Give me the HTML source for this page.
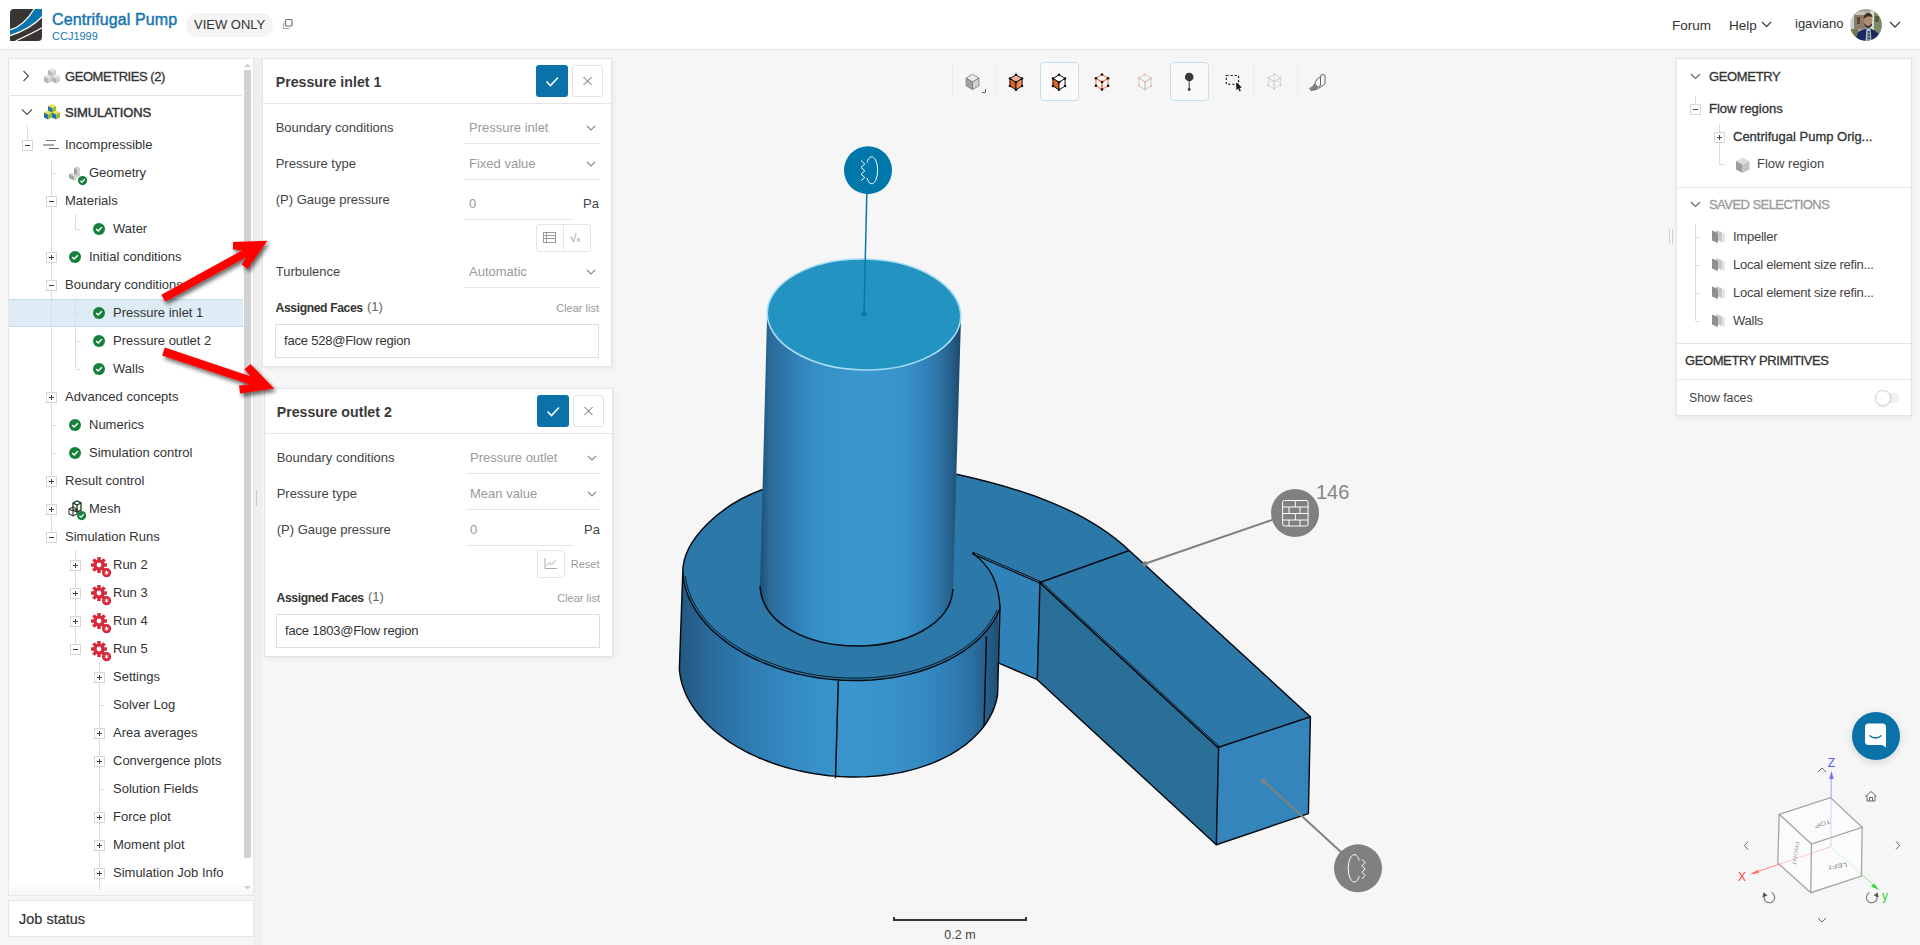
<!DOCTYPE html>
<html><head><meta charset="utf-8"><title>Centrifugal Pump</title>
<style>
html,body{margin:0;padding:0;}
body{width:1920px;height:945px;overflow:hidden;position:relative;background:#f6f6f6;font-family:"Liberation Sans", sans-serif;}
.t{position:absolute;white-space:nowrap;font-family:"Liberation Sans", sans-serif;}
.b{position:absolute;box-sizing:border-box;}
svg{position:absolute;overflow:visible;}
</style></head><body>
<div class="b" style="left:0px;top:0px;width:1920px;height:49px;background:#fff;"></div><div class="b" style="left:0px;top:49px;width:1920px;height:1px;background:#e4e4e4;"></div><div class="b" style="left:254px;top:58px;width:8px;height:887px;background:#efefef;"></div><div class="b" style="left:256px;top:490px;width:1px;height:16px;background:#c9c9c9;"></div><svg style="left:10px;top:9px" width="32" height="32" viewBox="0 0 32 32">
<path d="M4 0 H32 V28 Q32 32 28 32 H0 V4 Q0 0 4 0Z" fill="#3a3532"/>
<path d="M0 21.2 Q13.6 17.8 24.5 0 L32 0 L32 7.6 Q20 20.5 0 26.4 Z" fill="#0a76ae"/>
<path d="M0 20.8 Q13.6 17.4 24.2 0" fill="none" stroke="#fff" stroke-width="1.3"/>
<path d="M0 26.6 Q20 20.5 32 7.8" fill="none" stroke="#fff" stroke-width="1.3"/>
<path d="M5.5 32 Q22 24.5 32 18.8" fill="none" stroke="#fff" stroke-width="1.3"/>
</svg><div class="t" style="left:52px;top:11.26px;font-size:16px;line-height:18.4px;color:#1776b0;letter-spacing:0.1px;-webkit-text-stroke:0.45px #1776b0;">Centrifugal Pump</div><div class="t" style="left:52px;top:30.36px;font-size:11px;line-height:12.65px;color:#1776b0;">CCJ1999</div><div class="b" style="left:186px;top:13px;width:87px;height:24px;background:#f4f4f4;border-radius:12px;"></div><div class="t" style="left:194px;top:17.52px;font-size:13px;line-height:14.95px;color:#333;">VIEW ONLY</div><svg style="left:281px;top:18px" width="13" height="13" viewBox="0 0 13 13">
<rect x="4.5" y="1.5" width="6.5" height="6.5" rx="1" fill="none" stroke="#6a6a72" stroke-width="1.1"/>
<path d="M2.5 4.5 V10.5 H8.5" fill="none" stroke="#a8a8c0" stroke-width="1.1"/>
</svg><div class="t" style="left:1672px;top:17.56px;font-size:13.5px;line-height:15.52px;color:#333;">Forum</div><div class="t" style="left:1729px;top:17.56px;font-size:13.5px;line-height:15.52px;color:#333;">Help</div><svg style="left:1761px;top:21px" width="11" height="7"><path d="M1 1 L5.5 5.5 L10 1" fill="none" stroke="#444" stroke-width="1.3"/></svg><div class="t" style="left:1795px;top:17.02px;font-size:13px;line-height:14.95px;color:#333;">igaviano</div><svg style="left:1850px;top:9px" width="32" height="32" viewBox="0 0 32 32">
<defs><clipPath id="av"><circle cx="16" cy="16" r="15.9"/></clipPath><filter id="avb"><feGaussianBlur stdDeviation="0.5"/></filter></defs>
<g clip-path="url(#av)"><g filter="url(#avb)">
<rect width="32" height="32" fill="#a9a69c"/>
<rect x="0" y="0" width="5" height="32" fill="#c9d0d4"/>
<rect x="4" y="4" width="11" height="16" fill="#8c7c68"/>
<rect x="5" y="3" width="11" height="3" fill="#c7c4bd"/>
<rect x="7" y="8" width="3" height="7" fill="#5a4536"/>
<rect x="0" y="20" width="8" height="12" fill="#6d7a58"/>
<rect x="20" y="2" width="4" height="22" fill="#d9dad4"/>
<rect x="24" y="4" width="8" height="22" fill="#7d8a6a"/>
<rect x="25" y="7" width="4" height="6" fill="#4f6040"/>
<ellipse cx="18" cy="11.5" rx="4.2" ry="6" fill="#b38d73"/>
<path d="M13.5 9.5 Q14 3.5 19 4 Q22.5 4.5 22.5 9 L21.5 8 Q18 6 14.5 9.5Z" fill="#3c3129"/>
<path d="M14.5 14 Q18 20.5 22 14 L22 16.5 Q18 21.5 14.5 16.5Z" fill="#3a2d26"/>
<path d="M5 32 L8 23 Q12 20.5 16.5 19.5 L20.5 19.5 Q25 21 28 24 L31 32Z" fill="#1e2c5e"/>
<path d="M16.5 19.5 L20.5 19.5 L21.5 32 L15.5 32Z" fill="#a8c3e6"/>
<path d="M17.8 22 L19.8 22 L20.3 32 L17.3 32Z" fill="#3b4a5a"/>
<path d="M18 24 L20 25 M17.6 27 L20 28 M17.5 30 L20.2 31" stroke="#c9c28a" stroke-width="0.7"/>
</g></g></svg><svg style="left:1889px;top:21px" width="12" height="8"><path d="M1 1 L6 6 L11 1" fill="none" stroke="#444" stroke-width="1.4"/></svg><div class="b" style="left:8px;top:58px;width:246px;height:838px;background:#fff;border:1px solid #e6e6e6;"></div><div class="b" style="left:10px;top:880px;width:243px;height:15px;background:linear-gradient(rgba(255,255,255,0),#f7f7f7);"></div><div class="b" style="left:244px;top:70px;width:7px;height:788px;background:#d2d2d2;"></div><svg style="left:243px;top:62px" width="9" height="6"><path d="M1 5 L4.5 1.5 L8 5 Z" fill="#cfcfcf"/></svg><svg style="left:243px;top:885px" width="9" height="6"><path d="M1 1 L4.5 4.5 L8 1 Z" fill="#cfcfcf"/></svg><div class="b" style="left:8px;top:900px;width:246px;height:37px;background:#fff;border:1px solid #e6e6e6;"></div><div class="t" style="left:19px;top:911.14px;font-size:14.5px;line-height:16.67px;color:#333;-webkit-text-stroke:0.2px #333;">Job status</div><svg style="left:22px;top:70px" width="8" height="12"><path d="M1.5 1 L6.5 6 L1.5 11" fill="none" stroke="#555" stroke-width="1.2"/></svg><svg style="left:21px;top:108px" width="12" height="8"><path d="M1 1.5 L6 6.5 L11 1.5" fill="none" stroke="#555" stroke-width="1.2"/></svg><svg style="left:43px;top:67px" width="18" height="18"><path d="M5 3 l4 -2 l4 2 l-4 2z" fill="#e3e3e3"/><path d="M5 3 l4 2 v5 l-4 -2z" fill="#b5b5b5"/><path d="M13 3 l-4 2 v5 l4 -2z" fill="#cfcfcf"/><path d="M1 9.5 l4 -2 l4 2 l-4 2z" fill="#e3e3e3"/><path d="M1 9.5 l4 2 v5 l-4 -2z" fill="#b5b5b5"/><path d="M9 9.5 l-4 2 v5 l4 -2z" fill="#cfcfcf"/><path d="M9 9.5 l4 -2 l4 2 l-4 2z" fill="#e3e3e3"/><path d="M9 9.5 l4 2 v5 l-4 -2z" fill="#b5b5b5"/><path d="M17 9.5 l-4 2 v5 l4 -2z" fill="#cfcfcf"/></svg><svg style="left:43px;top:103px" width="18" height="18"><path d="M5 3 l4 -2 l4 2 l-4 2z" fill="#f0e046"/><path d="M5 3 l4 2 v5 l-4 -2z" fill="#2a6fb0"/><path d="M13 3 l-4 2 v5 l4 -2z" fill="#8bbf3a"/><path d="M1 9.5 l4 -2 l4 2 l-4 2z" fill="#f0e046"/><path d="M1 9.5 l4 2 v5 l-4 -2z" fill="#2a6fb0"/><path d="M9 9.5 l-4 2 v5 l4 -2z" fill="#8bbf3a"/><path d="M9 9.5 l4 -2 l4 2 l-4 2z" fill="#f0e046"/><path d="M9 9.5 l4 2 v5 l-4 -2z" fill="#2a6fb0"/><path d="M17 9.5 l-4 2 v5 l4 -2z" fill="#8bbf3a"/></svg><div class="t" style="left:65px;top:69.52px;font-size:13px;line-height:14.95px;color:#333;letter-spacing:-0.45px;-webkit-text-stroke:0.3px #333;">GEOMETRIES (2)</div><div class="b" style="left:10px;top:95px;width:232px;height:1px;background:#e4e4e4;"></div><div class="t" style="left:65px;top:105.52px;font-size:13px;line-height:14.95px;color:#333;letter-spacing:-0.1px;-webkit-text-stroke:0.45px #333;">SIMULATIONS</div><div class="b" style="left:27px;top:125px;width:1px;height:15px;background:#dcdcdc;"></div><div class="b" style="left:51px;top:160px;width:1px;height:376px;background:#dcdcdc;"></div><div class="b" style="left:51px;top:173px;width:5px;height:1px;background:#dcdcdc;"></div><div class="b" style="left:51px;top:425px;width:5px;height:1px;background:#dcdcdc;"></div><div class="b" style="left:51px;top:453px;width:5px;height:1px;background:#dcdcdc;"></div><div class="b" style="left:75px;top:214px;width:1px;height:15px;background:#dcdcdc;"></div><div class="b" style="left:75px;top:229px;width:5px;height:1px;background:#dcdcdc;"></div><div class="b" style="left:75px;top:298px;width:1px;height:70px;background:#dcdcdc;"></div><div class="b" style="left:75px;top:313px;width:5px;height:1px;background:#dcdcdc;"></div><div class="b" style="left:75px;top:341px;width:5px;height:1px;background:#dcdcdc;"></div><div class="b" style="left:75px;top:369px;width:5px;height:1px;background:#dcdcdc;"></div><div class="b" style="left:75px;top:550px;width:1px;height:98px;background:#dcdcdc;"></div><div class="b" style="left:99px;top:662px;width:1px;height:228px;background:#dcdcdc;"></div><div class="b" style="left:99px;top:705px;width:5px;height:1px;background:#dcdcdc;"></div><div class="b" style="left:99px;top:789px;width:5px;height:1px;background:#dcdcdc;"></div><div class="b" style="left:9px;top:299px;width:234px;height:28px;background:#deedf5;border-top:1px solid #c5dcea;border-bottom:1px solid #c5dcea;"></div><div class="b" style="left:51px;top:299px;width:1px;height:28px;background:#dcdcdc;"></div><div class="b" style="left:75px;top:299px;width:1px;height:28px;background:#dcdcdc;"></div><div class="b" style="left:75px;top:313px;width:5px;height:1px;background:#dcdcdc;"></div><div class="b" style="left:22px;top:140px;width:11px;height:11px;background:#fff;border:1px solid #d6d6d6;"></div><div class="b" style="left:25px;top:145px;width:5px;height:1px;background:#444;"></div><div class="b" style="left:46px;top:140px;width:10px;height:1px;background:#777;"></div><div class="b" style="left:43px;top:144px;width:11px;height:1.5px;background:#aaa;"></div><div class="b" style="left:49px;top:147.5px;width:10px;height:1px;background:#666;"></div><div class="t" style="left:65px;top:138.02px;font-size:13px;line-height:14.95px;color:#333;">Incompressible</div><svg style="left:68px;top:166px" width="22" height="20" viewBox="0 0 22 20"><path d="M6 2 l3 -1.5 l3 1.5 v8 l-3 1.5 l-3 -1.5z" fill="#d0d0d0"/><path d="M6 2 l3 1.5 v8 l-3 -1.5z" fill="#9d9d9d"/><path d="M1 8 l3 -1.5 l5 2.5 v4 l-3 1.5 l-5 -2.5z" fill="#d6d6d6"/><path d="M1 8 l5 2.5 v4 l-5 -2.5z" fill="#a5a5a5"/></svg><svg style="left:77.9px;top:176.4px" width="9.2" height="9.2" viewBox="0 0 12 12"><circle cx="6" cy="6" r="6" fill="#16813c"/><path d="M3.2 6.2 L5.2 8 L8.8 4.3" fill="none" stroke="#fff" stroke-width="1.6"/></svg><div class="t" style="left:89px;top:166.02px;font-size:13px;line-height:14.95px;color:#333;">Geometry</div><div class="b" style="left:46px;top:196px;width:11px;height:11px;background:#fff;border:1px solid #d6d6d6;"></div><div class="b" style="left:49px;top:201px;width:5px;height:1px;background:#444;"></div><div class="t" style="left:65px;top:194.02px;font-size:13px;line-height:14.95px;color:#333;">Materials</div><svg style="left:93px;top:223px" width="12" height="12" viewBox="0 0 12 12"><circle cx="6" cy="6" r="6" fill="#16813c"/><path d="M3.2 6.2 L5.2 8 L8.8 4.3" fill="none" stroke="#fff" stroke-width="1.6"/></svg><div class="t" style="left:113px;top:222.02px;font-size:13px;line-height:14.95px;color:#333;">Water</div><div class="b" style="left:46px;top:252px;width:11px;height:11px;background:#fff;border:1px solid #d6d6d6;"></div><div class="b" style="left:49px;top:257px;width:5px;height:1px;background:#444;"></div><div class="b" style="left:51px;top:255px;width:1px;height:5px;background:#444;"></div><svg style="left:69px;top:251px" width="12" height="12" viewBox="0 0 12 12"><circle cx="6" cy="6" r="6" fill="#16813c"/><path d="M3.2 6.2 L5.2 8 L8.8 4.3" fill="none" stroke="#fff" stroke-width="1.6"/></svg><div class="t" style="left:89px;top:250.02px;font-size:13px;line-height:14.95px;color:#333;">Initial conditions</div><div class="b" style="left:46px;top:280px;width:11px;height:11px;background:#fff;border:1px solid #d6d6d6;"></div><div class="b" style="left:49px;top:285px;width:5px;height:1px;background:#444;"></div><div class="t" style="left:65px;top:278.02px;font-size:13px;line-height:14.95px;color:#333;">Boundary conditions</div><svg style="left:93px;top:307px" width="12" height="12" viewBox="0 0 12 12"><circle cx="6" cy="6" r="6" fill="#16813c"/><path d="M3.2 6.2 L5.2 8 L8.8 4.3" fill="none" stroke="#fff" stroke-width="1.6"/></svg><div class="t" style="left:113px;top:306.02px;font-size:13px;line-height:14.95px;color:#333;">Pressure inlet 1</div><svg style="left:93px;top:335px" width="12" height="12" viewBox="0 0 12 12"><circle cx="6" cy="6" r="6" fill="#16813c"/><path d="M3.2 6.2 L5.2 8 L8.8 4.3" fill="none" stroke="#fff" stroke-width="1.6"/></svg><div class="t" style="left:113px;top:334.02px;font-size:13px;line-height:14.95px;color:#333;">Pressure outlet 2</div><svg style="left:93px;top:363px" width="12" height="12" viewBox="0 0 12 12"><circle cx="6" cy="6" r="6" fill="#16813c"/><path d="M3.2 6.2 L5.2 8 L8.8 4.3" fill="none" stroke="#fff" stroke-width="1.6"/></svg><div class="t" style="left:113px;top:362.02px;font-size:13px;line-height:14.95px;color:#333;">Walls</div><div class="b" style="left:46px;top:392px;width:11px;height:11px;background:#fff;border:1px solid #d6d6d6;"></div><div class="b" style="left:49px;top:397px;width:5px;height:1px;background:#444;"></div><div class="b" style="left:51px;top:395px;width:1px;height:5px;background:#444;"></div><div class="t" style="left:65px;top:390.02px;font-size:13px;line-height:14.95px;color:#333;">Advanced concepts</div><svg style="left:69px;top:419px" width="12" height="12" viewBox="0 0 12 12"><circle cx="6" cy="6" r="6" fill="#16813c"/><path d="M3.2 6.2 L5.2 8 L8.8 4.3" fill="none" stroke="#fff" stroke-width="1.6"/></svg><div class="t" style="left:89px;top:418.02px;font-size:13px;line-height:14.95px;color:#333;">Numerics</div><svg style="left:69px;top:447px" width="12" height="12" viewBox="0 0 12 12"><circle cx="6" cy="6" r="6" fill="#16813c"/><path d="M3.2 6.2 L5.2 8 L8.8 4.3" fill="none" stroke="#fff" stroke-width="1.6"/></svg><div class="t" style="left:89px;top:446.02px;font-size:13px;line-height:14.95px;color:#333;">Simulation control</div><div class="b" style="left:46px;top:476px;width:11px;height:11px;background:#fff;border:1px solid #d6d6d6;"></div><div class="b" style="left:49px;top:481px;width:5px;height:1px;background:#444;"></div><div class="b" style="left:51px;top:479px;width:1px;height:5px;background:#444;"></div><div class="t" style="left:65px;top:474.02px;font-size:13px;line-height:14.95px;color:#333;">Result control</div><div class="b" style="left:46px;top:504px;width:11px;height:11px;background:#fff;border:1px solid #d6d6d6;"></div><div class="b" style="left:49px;top:509px;width:5px;height:1px;background:#444;"></div><div class="b" style="left:51px;top:507px;width:1px;height:5px;background:#444;"></div><svg style="left:68px;top:500px" width="22" height="20" viewBox="0 0 22 20"><path d="M5 3 l4 -2 l4 2 v7 l-4 2 l-4 -2z M5 3 l4 2 v7 M9 5 l4 -2" fill="none" stroke="#0c3814" stroke-width="1.3"/><path d="M1 9 l4 -2 l4 2 v5 l-4 2 l-4 -2z M1 9 l4 2 v5 M5 11 l4 -2" fill="none" stroke="#333" stroke-width="1.1"/></svg><svg style="left:76.9px;top:511.4px" width="9.2" height="9.2" viewBox="0 0 12 12"><circle cx="6" cy="6" r="6" fill="#16813c"/><path d="M3.2 6.2 L5.2 8 L8.8 4.3" fill="none" stroke="#fff" stroke-width="1.6"/></svg><div class="t" style="left:89px;top:502.02px;font-size:13px;line-height:14.95px;color:#333;">Mesh</div><div class="b" style="left:46px;top:532px;width:11px;height:11px;background:#fff;border:1px solid #d6d6d6;"></div><div class="b" style="left:49px;top:537px;width:5px;height:1px;background:#444;"></div><div class="t" style="left:65px;top:530.02px;font-size:13px;line-height:14.95px;color:#333;">Simulation Runs</div><div class="b" style="left:70px;top:560px;width:11px;height:11px;background:#fff;border:1px solid #d6d6d6;"></div><div class="b" style="left:73px;top:565px;width:5px;height:1px;background:#444;"></div><div class="b" style="left:75px;top:563px;width:1px;height:5px;background:#444;"></div><svg style="left:89px;top:555px" width="22" height="22" viewBox="-10 -10 22 22"><g><rect x="-1.7" y="-8" width="3.4" height="4" transform="rotate(0)" fill="#d8283b"/><rect x="-1.7" y="-8" width="3.4" height="4" transform="rotate(45)" fill="#d8283b"/><rect x="-1.7" y="-8" width="3.4" height="4" transform="rotate(90)" fill="#d8283b"/><rect x="-1.7" y="-8" width="3.4" height="4" transform="rotate(135)" fill="#d8283b"/><rect x="-1.7" y="-8" width="3.4" height="4" transform="rotate(180)" fill="#d8283b"/><rect x="-1.7" y="-8" width="3.4" height="4" transform="rotate(225)" fill="#d8283b"/><rect x="-1.7" y="-8" width="3.4" height="4" transform="rotate(270)" fill="#d8283b"/><rect x="-1.7" y="-8" width="3.4" height="4" transform="rotate(315)" fill="#d8283b"/><circle r="5.6" fill="#d8283b"/><circle r="2.4" fill="#fff"/></g><circle cx="7.6" cy="7.7" r="4.6" fill="#d8283b"/><path d="M7.6 5.6 V9.8 M5.8 6.6 L9.4 8.8 M5.8 8.8 L9.4 6.6" stroke="#fff" stroke-width="0.9"/></svg><div class="t" style="left:113px;top:558.02px;font-size:13px;line-height:14.95px;color:#333;">Run 2</div><div class="b" style="left:70px;top:588px;width:11px;height:11px;background:#fff;border:1px solid #d6d6d6;"></div><div class="b" style="left:73px;top:593px;width:5px;height:1px;background:#444;"></div><div class="b" style="left:75px;top:591px;width:1px;height:5px;background:#444;"></div><svg style="left:89px;top:583px" width="22" height="22" viewBox="-10 -10 22 22"><g><rect x="-1.7" y="-8" width="3.4" height="4" transform="rotate(0)" fill="#d8283b"/><rect x="-1.7" y="-8" width="3.4" height="4" transform="rotate(45)" fill="#d8283b"/><rect x="-1.7" y="-8" width="3.4" height="4" transform="rotate(90)" fill="#d8283b"/><rect x="-1.7" y="-8" width="3.4" height="4" transform="rotate(135)" fill="#d8283b"/><rect x="-1.7" y="-8" width="3.4" height="4" transform="rotate(180)" fill="#d8283b"/><rect x="-1.7" y="-8" width="3.4" height="4" transform="rotate(225)" fill="#d8283b"/><rect x="-1.7" y="-8" width="3.4" height="4" transform="rotate(270)" fill="#d8283b"/><rect x="-1.7" y="-8" width="3.4" height="4" transform="rotate(315)" fill="#d8283b"/><circle r="5.6" fill="#d8283b"/><circle r="2.4" fill="#fff"/></g><circle cx="7.6" cy="7.7" r="4.6" fill="#d8283b"/><path d="M7.6 5.6 V9.8 M5.8 6.6 L9.4 8.8 M5.8 8.8 L9.4 6.6" stroke="#fff" stroke-width="0.9"/></svg><div class="t" style="left:113px;top:586.02px;font-size:13px;line-height:14.95px;color:#333;">Run 3</div><div class="b" style="left:70px;top:616px;width:11px;height:11px;background:#fff;border:1px solid #d6d6d6;"></div><div class="b" style="left:73px;top:621px;width:5px;height:1px;background:#444;"></div><div class="b" style="left:75px;top:619px;width:1px;height:5px;background:#444;"></div><svg style="left:89px;top:611px" width="22" height="22" viewBox="-10 -10 22 22"><g><rect x="-1.7" y="-8" width="3.4" height="4" transform="rotate(0)" fill="#d8283b"/><rect x="-1.7" y="-8" width="3.4" height="4" transform="rotate(45)" fill="#d8283b"/><rect x="-1.7" y="-8" width="3.4" height="4" transform="rotate(90)" fill="#d8283b"/><rect x="-1.7" y="-8" width="3.4" height="4" transform="rotate(135)" fill="#d8283b"/><rect x="-1.7" y="-8" width="3.4" height="4" transform="rotate(180)" fill="#d8283b"/><rect x="-1.7" y="-8" width="3.4" height="4" transform="rotate(225)" fill="#d8283b"/><rect x="-1.7" y="-8" width="3.4" height="4" transform="rotate(270)" fill="#d8283b"/><rect x="-1.7" y="-8" width="3.4" height="4" transform="rotate(315)" fill="#d8283b"/><circle r="5.6" fill="#d8283b"/><circle r="2.4" fill="#fff"/></g><circle cx="7.6" cy="7.7" r="4.6" fill="#d8283b"/><path d="M7.6 5.6 V9.8 M5.8 6.6 L9.4 8.8 M5.8 8.8 L9.4 6.6" stroke="#fff" stroke-width="0.9"/></svg><div class="t" style="left:113px;top:614.02px;font-size:13px;line-height:14.95px;color:#333;">Run 4</div><div class="b" style="left:70px;top:644px;width:11px;height:11px;background:#fff;border:1px solid #d6d6d6;"></div><div class="b" style="left:73px;top:649px;width:5px;height:1px;background:#444;"></div><svg style="left:89px;top:639px" width="22" height="22" viewBox="-10 -10 22 22"><g><rect x="-1.7" y="-8" width="3.4" height="4" transform="rotate(0)" fill="#d8283b"/><rect x="-1.7" y="-8" width="3.4" height="4" transform="rotate(45)" fill="#d8283b"/><rect x="-1.7" y="-8" width="3.4" height="4" transform="rotate(90)" fill="#d8283b"/><rect x="-1.7" y="-8" width="3.4" height="4" transform="rotate(135)" fill="#d8283b"/><rect x="-1.7" y="-8" width="3.4" height="4" transform="rotate(180)" fill="#d8283b"/><rect x="-1.7" y="-8" width="3.4" height="4" transform="rotate(225)" fill="#d8283b"/><rect x="-1.7" y="-8" width="3.4" height="4" transform="rotate(270)" fill="#d8283b"/><rect x="-1.7" y="-8" width="3.4" height="4" transform="rotate(315)" fill="#d8283b"/><circle r="5.6" fill="#d8283b"/><circle r="2.4" fill="#fff"/></g><circle cx="7.6" cy="7.7" r="4.6" fill="#d8283b"/><path d="M7.6 5.6 V9.8 M5.8 6.6 L9.4 8.8 M5.8 8.8 L9.4 6.6" stroke="#fff" stroke-width="0.9"/></svg><div class="t" style="left:113px;top:642.02px;font-size:13px;line-height:14.95px;color:#333;">Run 5</div><div class="b" style="left:94px;top:672px;width:11px;height:11px;background:#fff;border:1px solid #d6d6d6;"></div><div class="b" style="left:97px;top:677px;width:5px;height:1px;background:#444;"></div><div class="b" style="left:99px;top:675px;width:1px;height:5px;background:#444;"></div><div class="t" style="left:113px;top:670.02px;font-size:13px;line-height:14.95px;color:#333;">Settings</div><div class="t" style="left:113px;top:698.02px;font-size:13px;line-height:14.95px;color:#333;">Solver Log</div><div class="b" style="left:94px;top:728px;width:11px;height:11px;background:#fff;border:1px solid #d6d6d6;"></div><div class="b" style="left:97px;top:733px;width:5px;height:1px;background:#444;"></div><div class="b" style="left:99px;top:731px;width:1px;height:5px;background:#444;"></div><div class="t" style="left:113px;top:726.02px;font-size:13px;line-height:14.95px;color:#333;">Area averages</div><div class="b" style="left:94px;top:756px;width:11px;height:11px;background:#fff;border:1px solid #d6d6d6;"></div><div class="b" style="left:97px;top:761px;width:5px;height:1px;background:#444;"></div><div class="b" style="left:99px;top:759px;width:1px;height:5px;background:#444;"></div><div class="t" style="left:113px;top:754.02px;font-size:13px;line-height:14.95px;color:#333;">Convergence plots</div><div class="t" style="left:113px;top:782.02px;font-size:13px;line-height:14.95px;color:#333;">Solution Fields</div><div class="b" style="left:94px;top:812px;width:11px;height:11px;background:#fff;border:1px solid #d6d6d6;"></div><div class="b" style="left:97px;top:817px;width:5px;height:1px;background:#444;"></div><div class="b" style="left:99px;top:815px;width:1px;height:5px;background:#444;"></div><div class="t" style="left:113px;top:810.02px;font-size:13px;line-height:14.95px;color:#333;">Force plot</div><div class="b" style="left:94px;top:840px;width:11px;height:11px;background:#fff;border:1px solid #d6d6d6;"></div><div class="b" style="left:97px;top:845px;width:5px;height:1px;background:#444;"></div><div class="b" style="left:99px;top:843px;width:1px;height:5px;background:#444;"></div><div class="t" style="left:113px;top:838.02px;font-size:13px;line-height:14.95px;color:#333;">Moment plot</div><div class="b" style="left:94px;top:868px;width:11px;height:11px;background:#fff;border:1px solid #d6d6d6;"></div><div class="b" style="left:97px;top:873px;width:5px;height:1px;background:#444;"></div><div class="b" style="left:99px;top:871px;width:1px;height:5px;background:#444;"></div><div class="t" style="left:113px;top:866.02px;font-size:13px;line-height:14.95px;color:#333;">Simulation Job Info</div><div class="b" style="left:262px;top:58px;width:350px;height:309px;background:#fff;border:1px solid #e4e4e4;box-shadow:2px 2px 5px rgba(0,0,0,0.05);"></div><div class="b" style="left:263px;top:103px;width:348px;height:1px;background:#e6e6e6;"></div><div class="t" style="left:275.7px;top:73.91px;font-size:14.2px;line-height:16.33px;color:#3a3a3a;font-weight:700;">Pressure inlet 1</div><div class="b" style="left:536px;top:65px;width:32px;height:32px;background:#0a72a8;border-radius:3px;"></div><svg style="left:536px;top:65px" width="32" height="32"><path d="M10.5 16.5 L14.5 20.5 L22 12.5" fill="none" stroke="#fff" stroke-width="1.6"/></svg><div class="b" style="left:572px;top:65px;width:31px;height:32px;background:#fff;border:1px solid #e1e1e1;border-radius:3px;"></div><svg style="left:572px;top:65px" width="31" height="32"><path d="M11.5 12 L19.5 20 M19.5 12 L11.5 20" fill="none" stroke="#666" stroke-width="1"/></svg><div class="t" style="left:275.7px;top:120.52px;font-size:13px;line-height:14.95px;color:#444;">Boundary conditions</div><div class="t" style="left:469px;top:120.52px;font-size:13px;line-height:14.95px;color:#9a9a9a;">Pressure inlet</div><div class="b" style="left:465px;top:143px;width:134px;height:1px;background:#e6e6e6;"></div><svg style="left:586px;top:124.5px" width="10" height="6"><path d="M1 1 L5 5 L9 1" fill="none" stroke="#888" stroke-width="1.1"/></svg><div class="t" style="left:275.7px;top:156.52px;font-size:13px;line-height:14.95px;color:#444;">Pressure type</div><div class="t" style="left:469px;top:156.52px;font-size:13px;line-height:14.95px;color:#9a9a9a;">Fixed value</div><div class="b" style="left:465px;top:179px;width:134px;height:1px;background:#e6e6e6;"></div><svg style="left:586px;top:160.5px" width="10" height="6"><path d="M1 1 L5 5 L9 1" fill="none" stroke="#888" stroke-width="1.1"/></svg><div class="t" style="left:275.7px;top:193.02px;font-size:13px;line-height:14.95px;color:#444;">(P) Gauge pressure</div><div class="t" style="left:469px;top:197.02px;font-size:13px;line-height:14.95px;color:#9a9a9a;">0</div><div class="b" style="left:465px;top:219px;width:108px;height:1px;background:#e6e6e6;"></div><div class="t" style="right:1321px;top:197.02px;font-size:13px;line-height:14.95px;color:#444;">Pa</div><div class="t" style="left:275.7px;top:264.52px;font-size:13px;line-height:14.95px;color:#444;">Turbulence</div><div class="t" style="left:469px;top:264.52px;font-size:13px;line-height:14.95px;color:#9a9a9a;">Automatic</div><div class="b" style="left:465px;top:287px;width:134px;height:1px;background:#e6e6e6;"></div><svg style="left:586px;top:268.5px" width="10" height="6"><path d="M1 1 L5 5 L9 1" fill="none" stroke="#888" stroke-width="1.1"/></svg><div class="b" style="left:536px;top:224px;width:55px;height:28px;background:#fff;border:1px solid #e6e6e6;border-radius:3px;"></div><div class="b" style="left:563px;top:225px;width:1px;height:26px;background:#e6e6e6;"></div><svg style="left:543px;top:231px" width="14" height="13"><rect x="0.5" y="1.5" width="12" height="10" fill="none" stroke="#999" stroke-width="1"/><path d="M0.5 4.5 H12.5 M0.5 7.5 H12.5 M3.5 1.5 V11.5" stroke="#999" stroke-width="1"/></svg><div class="t" style="left:570px;top:231.94px;font-size:12px;line-height:13.8px;color:#999;">&#8730;<span style="font-size:8px">x</span></div><div class="t" style="left:275.5px;top:300.76px;font-size:12.2px;line-height:14.03px;color:#333;font-weight:700;letter-spacing:-0.4px;">Assigned Faces</div><div class="t" style="left:367px;top:300.02px;font-size:13px;line-height:14.95px;color:#666;">(1)</div><div class="t" style="right:1321px;top:302.36px;font-size:11px;line-height:12.65px;color:#9a9a9a;">Clear list</div><div class="b" style="left:275px;top:324.0px;width:324px;height:34px;background:#fff;border:1px solid #dedede;"></div><div class="t" style="left:284px;top:333.52px;font-size:13px;line-height:14.95px;color:#333;letter-spacing:-0.2px;">face 528@Flow region</div><div class="b" style="left:264px;top:388px;width:349px;height:269px;background:#fff;border:1px solid #e4e4e4;box-shadow:2px 2px 5px rgba(0,0,0,0.05);"></div><div class="b" style="left:265px;top:433px;width:347px;height:1px;background:#e6e6e6;"></div><div class="t" style="left:276.7px;top:403.91px;font-size:14.2px;line-height:16.33px;color:#3a3a3a;font-weight:700;">Pressure outlet 2</div><div class="b" style="left:537px;top:395px;width:32px;height:32px;background:#0a72a8;border-radius:3px;"></div><svg style="left:537px;top:395px" width="32" height="32"><path d="M10.5 16.5 L14.5 20.5 L22 12.5" fill="none" stroke="#fff" stroke-width="1.6"/></svg><div class="b" style="left:573px;top:395px;width:31px;height:32px;background:#fff;border:1px solid #e1e1e1;border-radius:3px;"></div><svg style="left:573px;top:395px" width="31" height="32"><path d="M11.5 12 L19.5 20 M19.5 12 L11.5 20" fill="none" stroke="#666" stroke-width="1"/></svg><div class="t" style="left:276.7px;top:450.52px;font-size:13px;line-height:14.95px;color:#444;">Boundary conditions</div><div class="t" style="left:470px;top:450.52px;font-size:13px;line-height:14.95px;color:#9a9a9a;">Pressure outlet</div><div class="b" style="left:466px;top:473px;width:134px;height:1px;background:#e6e6e6;"></div><svg style="left:587px;top:454.5px" width="10" height="6"><path d="M1 1 L5 5 L9 1" fill="none" stroke="#888" stroke-width="1.1"/></svg><div class="t" style="left:276.7px;top:486.52px;font-size:13px;line-height:14.95px;color:#444;">Pressure type</div><div class="t" style="left:470px;top:486.52px;font-size:13px;line-height:14.95px;color:#9a9a9a;">Mean value</div><div class="b" style="left:466px;top:509px;width:134px;height:1px;background:#e6e6e6;"></div><svg style="left:587px;top:490.5px" width="10" height="6"><path d="M1 1 L5 5 L9 1" fill="none" stroke="#888" stroke-width="1.1"/></svg><div class="t" style="left:276.7px;top:523.02px;font-size:13px;line-height:14.95px;color:#444;">(P) Gauge pressure</div><div class="t" style="left:470px;top:522.52px;font-size:13px;line-height:14.95px;color:#9a9a9a;">0</div><div class="b" style="left:466px;top:545px;width:108px;height:1px;background:#e6e6e6;"></div><div class="t" style="right:1320px;top:522.52px;font-size:13px;line-height:14.95px;color:#444;">Pa</div><div class="b" style="left:537px;top:550px;width:28px;height:28px;background:#fff;border:1px solid #e6e6e6;border-radius:3px;"></div><svg style="left:544px;top:557px" width="14" height="13"><path d="M1 1 V11.5 H13" fill="none" stroke="#aaa" stroke-width="1"/><path d="M2.5 9 L5.5 5.5 L8 7.5 L11.5 3.5" fill="none" stroke="#aaa" stroke-width="1"/></svg><div class="t" style="right:1320.5px;top:558.36px;font-size:11px;line-height:12.65px;color:#9a9a9a;">Reset</div><div class="t" style="left:276.5px;top:590.76px;font-size:12.2px;line-height:14.03px;color:#333;font-weight:700;letter-spacing:-0.4px;">Assigned Faces</div><div class="t" style="left:368px;top:590.02px;font-size:13px;line-height:14.95px;color:#666;">(1)</div><div class="t" style="right:1320px;top:592.36px;font-size:11px;line-height:12.65px;color:#9a9a9a;">Clear list</div><div class="b" style="left:276px;top:614.0px;width:324px;height:34px;background:#fff;border:1px solid #dedede;"></div><div class="t" style="left:285px;top:623.52px;font-size:13px;line-height:14.95px;color:#333;letter-spacing:-0.2px;">face 1803@Flow region</div><div class="b" style="left:1676px;top:58px;width:236px;height:358px;background:#fff;border:1px solid #e4e4e4;box-shadow:0 2px 6px rgba(0,0,0,0.06);"></div><svg style="left:1690px;top:73px" width="11" height="7"><path d="M1 1 L5.5 5.5 L10 1" fill="none" stroke="#666" stroke-width="1.2"/></svg><div class="t" style="left:1709px;top:70.02px;font-size:13px;line-height:14.95px;color:#333;letter-spacing:-0.35px;-webkit-text-stroke:0.3px #333;">GEOMETRY</div><div class="b" style="left:1695px;top:96px;width:1px;height:8px;background:#dcdcdc;"></div><div class="b" style="left:1690px;top:104px;width:11px;height:11px;background:#fff;border:1px solid #d6d6d6;"></div><div class="b" style="left:1693px;top:109px;width:5px;height:1px;background:#444;"></div><div class="t" style="left:1709px;top:101.72px;font-size:13px;line-height:14.95px;color:#333;-webkit-text-stroke:0.3px #333;">Flow regions</div><div class="b" style="left:1719px;top:124px;width:1px;height:8px;background:#dcdcdc;"></div><div class="b" style="left:1719px;top:143px;width:1px;height:21px;background:#dcdcdc;"></div><div class="b" style="left:1719px;top:164px;width:6px;height:1px;background:#dcdcdc;"></div><div class="b" style="left:1714px;top:132px;width:11px;height:11px;background:#fff;border:1px solid #d6d6d6;"></div><div class="b" style="left:1717px;top:137px;width:5px;height:1px;background:#444;"></div><div class="b" style="left:1719px;top:135px;width:1px;height:5px;background:#444;"></div><div class="t" style="left:1733px;top:129.52px;font-size:13px;line-height:14.95px;color:#333;-webkit-text-stroke:0.3px #333;">Centrifugal Pump Orig...</div><svg style="left:1735px;top:157px" width="16" height="17" viewBox="0 0 16 17">
<path d="M1 4 L7.5 0.5 L14.5 4 L7.5 7.5Z" fill="#dedede"/><path d="M1 4 L7.5 7.5 V16 L1 12.5Z" fill="#9e9e9e"/><path d="M14.5 4 L7.5 7.5 V16 L14.5 12.5Z" fill="#c4c4c4"/></svg><div class="t" style="left:1757px;top:157.02px;font-size:13px;line-height:14.95px;color:#444;">Flow region</div><div class="b" style="left:1677px;top:187px;width:234px;height:1px;background:#e4e4e4;"></div><svg style="left:1690px;top:201px" width="11" height="7"><path d="M1 1 L5.5 5.5 L10 1" fill="none" stroke="#666" stroke-width="1.2"/></svg><div class="t" style="left:1709px;top:197.62px;font-size:13px;line-height:14.95px;color:#9a9a9a;letter-spacing:-0.55px;-webkit-text-stroke:0.3px #9a9a9a;">SAVED SELECTIONS</div><div class="b" style="left:1695px;top:224px;width:1px;height:96px;background:#dcdcdc;"></div><div class="b" style="left:1695px;top:237px;width:5px;height:1px;background:#dcdcdc;"></div><svg style="left:1711px;top:229px" width="16" height="15" viewBox="0 0 16 15">
<path d="M8 2 L14 4.5 V14 L8 11.5Z" fill="#e6e6e6"/><path d="M5 1 L11 3.5 V13 L5 10.5Z" fill="#c8c8c8"/><path d="M1 1.5 L7 4 V14 L1 11.5Z" fill="#8f8f8f"/></svg><div class="t" style="left:1733px;top:229.52px;font-size:13px;line-height:14.95px;color:#444;letter-spacing:-0.25px;">Impeller</div><div class="b" style="left:1695px;top:265px;width:5px;height:1px;background:#dcdcdc;"></div><svg style="left:1711px;top:257px" width="16" height="15" viewBox="0 0 16 15">
<path d="M8 2 L14 4.5 V14 L8 11.5Z" fill="#e6e6e6"/><path d="M5 1 L11 3.5 V13 L5 10.5Z" fill="#c8c8c8"/><path d="M1 1.5 L7 4 V14 L1 11.5Z" fill="#8f8f8f"/></svg><div class="t" style="left:1733px;top:257.52px;font-size:13px;line-height:14.95px;color:#444;letter-spacing:-0.25px;">Local element size refin...</div><div class="b" style="left:1695px;top:293px;width:5px;height:1px;background:#dcdcdc;"></div><svg style="left:1711px;top:285px" width="16" height="15" viewBox="0 0 16 15">
<path d="M8 2 L14 4.5 V14 L8 11.5Z" fill="#e6e6e6"/><path d="M5 1 L11 3.5 V13 L5 10.5Z" fill="#c8c8c8"/><path d="M1 1.5 L7 4 V14 L1 11.5Z" fill="#8f8f8f"/></svg><div class="t" style="left:1733px;top:285.52px;font-size:13px;line-height:14.95px;color:#444;letter-spacing:-0.25px;">Local element size refin...</div><div class="b" style="left:1695px;top:321px;width:5px;height:1px;background:#dcdcdc;"></div><svg style="left:1711px;top:313px" width="16" height="15" viewBox="0 0 16 15">
<path d="M8 2 L14 4.5 V14 L8 11.5Z" fill="#e6e6e6"/><path d="M5 1 L11 3.5 V13 L5 10.5Z" fill="#c8c8c8"/><path d="M1 1.5 L7 4 V14 L1 11.5Z" fill="#8f8f8f"/></svg><div class="t" style="left:1733px;top:313.52px;font-size:13px;line-height:14.95px;color:#444;letter-spacing:-0.25px;">Walls</div><div class="b" style="left:1677px;top:343px;width:234px;height:1px;background:#e4e4e4;"></div><div class="t" style="left:1685px;top:354.02px;font-size:13px;line-height:14.95px;color:#333;letter-spacing:-0.4px;-webkit-text-stroke:0.3px #333;">GEOMETRY PRIMITIVES</div><div class="b" style="left:1677px;top:379px;width:234px;height:1px;background:#e4e4e4;"></div><div class="t" style="left:1689px;top:391.27px;font-size:12.3px;line-height:14.14px;color:#444;">Show faces</div><div class="b" style="left:1880px;top:393px;width:19px;height:10px;background:#f0f0f0;border-radius:5px;"></div><div class="b" style="left:1875px;top:390px;width:16px;height:16px;background:#fff;border:1px solid #d4d4d4;border-radius:50%;box-shadow:0 1px 2px rgba(0,0,0,0.12);"></div><div class="b" style="left:1669px;top:229px;width:1px;height:15px;background:#cfcfcf;"></div><div class="b" style="left:1672px;top:229px;width:1px;height:15px;background:#cfcfcf;"></div><svg style="left:0px;top:0px" width="1920" height="945" viewBox="0 0 1920 945"><defs>
<linearGradient id="gPipe" gradientUnits="userSpaceOnUse" x1="760" y1="0" x2="961" y2="0">
<stop offset="0" stop-color="#1d4f72"/><stop offset="0.05" stop-color="#2a6c9b"/><stop offset="0.15" stop-color="#2f7bb1"/>
<stop offset="0.27" stop-color="#358fc5"/><stop offset="0.42" stop-color="#3995cb"/><stop offset="0.6" stop-color="#3a97cd"/><stop offset="0.72" stop-color="#3791c8"/>
<stop offset="0.82" stop-color="#3283bb"/><stop offset="0.9" stop-color="#2c71a3"/><stop offset="0.955" stop-color="#245d87"/><stop offset="1" stop-color="#1c4868"/>
</linearGradient>
<linearGradient id="gBase" gradientUnits="userSpaceOnUse" x1="679" y1="0" x2="998" y2="0">
<stop offset="0" stop-color="#22587f"/><stop offset="0.1" stop-color="#2a6b9b"/><stop offset="0.25" stop-color="#3080b7"/><stop offset="0.42" stop-color="#3790c8"/>
<stop offset="0.55" stop-color="#3a96cc"/><stop offset="0.7" stop-color="#3790c7"/><stop offset="0.84" stop-color="#3180b8"/><stop offset="0.92" stop-color="#2b6fa2"/><stop offset="0.97" stop-color="#245c86"/><stop offset="1" stop-color="#1f4f72"/>
</linearGradient>
</defs><path d="M999.98 608.50 L998.64 611.65 L997.14 614.76 L995.48 617.84 L993.67 620.87 L991.71 623.86 L989.59 626.79 L987.33 629.68 L984.93 632.51 L982.38 635.29 L979.69 638.00 L976.86 640.65 L973.90 643.24 L970.81 645.75 L967.59 648.20 L964.24 650.57 L960.77 652.87 L957.18 655.09 L953.48 657.22 L949.67 659.28 L945.74 661.25 L941.72 663.14 L937.60 664.93 L933.38 666.64 L929.07 668.25 L924.67 669.77 L920.20 671.20 L915.64 672.52 L911.01 673.75 L906.32 674.88 L901.56 675.91 L896.74 676.84 L891.87 677.67 L886.95 678.39 L881.99 679.01 L876.98 679.53 L871.95 679.94 L866.88 680.24 L861.80 680.44 L856.69 680.53 L851.57 680.52 L846.44 680.40 L841.32 680.17 L836.19 679.84 L831.07 679.40 L825.96 678.86 L820.88 678.21 L815.81 677.46 L810.78 676.61 L805.77 675.65 L800.81 674.59 L795.89 673.44 L791.02 672.18 L786.20 670.83 L781.44 669.38 L776.74 667.83 L772.12 666.19 L767.56 664.46 L763.08 662.64 L758.69 660.74 L754.38 658.74 L750.16 656.67 L746.03 654.51 L742.01 652.27 L738.09 649.95 L734.27 647.56 L730.57 645.09 L726.98 642.56 L723.51 639.95 L720.16 637.29 L716.94 634.56 L713.84 631.77 L710.88 628.92 L708.05 626.02 L705.36 623.07 L702.81 620.07 L700.40 617.03 L698.14 613.94 L696.03 610.82 L694.07 607.66 L692.25 604.47 L690.59 601.24 L689.09 598.00 L687.75 594.73 L686.56 591.44 L685.53 588.14 L684.66 584.82 L683.95 581.49 L683.41 578.16 L683.03 574.83 L682.81 571.49 C683 540 720 505 762.5 489.5 C800 474 900 466 956.5 474.3 C1016.5 487.5 1084.2 507.7 1129.2 550.5 L1310.4 716.8 L1218.6 747.2 L1040 582.5 L972.6 553 C990 566 999 582 1000 605 Z" fill="#2c78a9"/><path d="M682.81 571.49 L683.03 574.83 L683.41 578.16 L683.95 581.49 L684.66 584.82 L685.53 588.14 L686.56 591.44 L687.75 594.73 L689.09 598.00 L690.59 601.24 L692.25 604.47 L694.07 607.66 L696.03 610.82 L698.14 613.94 L700.40 617.03 L702.81 620.07 L705.36 623.07 L708.05 626.02 L710.88 628.92 L713.84 631.77 L716.94 634.56 L720.16 637.29 L723.51 639.95 L726.98 642.56 L730.57 645.09 L734.27 647.56 L738.09 649.95 L742.01 652.27 L746.03 654.51 L750.16 656.67 L754.38 658.74 L758.69 660.74 L763.08 662.64 L767.56 664.46 L772.12 666.19 L776.74 667.83 L781.44 669.38 L786.20 670.83 L791.02 672.18 L795.89 673.44 L800.81 674.59 L805.77 675.65 L810.78 676.61 L815.81 677.46 L820.88 678.21 L825.96 678.86 L831.07 679.40 L836.19 679.84 L841.32 680.17 L846.44 680.40 L851.57 680.52 L856.69 680.53 L861.80 680.44 L866.88 680.24 L871.95 679.94 L876.98 679.53 L881.99 679.01 L886.95 678.39 L891.87 677.67 L896.74 676.84 L901.56 675.91 L906.32 674.88 L911.01 673.75 L915.64 672.52 L920.20 671.20 L924.67 669.77 L929.07 668.25 L933.38 666.64 L937.60 664.93 L941.72 663.14 L945.74 661.25 L949.67 659.28 L953.48 657.22 L957.18 655.09 L960.77 652.87 L964.24 650.57 L967.59 648.20 L970.81 645.75 L973.90 643.24 L976.86 640.65 L979.69 638.00 L982.38 635.29 L984.93 632.51 L987.33 629.68 L989.59 626.79 L991.71 623.86 L993.67 620.87 L995.48 617.84 L997.14 614.76 L998.64 611.65 L999.98 608.50 L997.60 694.46 L997.01 697.80 L996.25 701.11 L995.30 704.39 L994.19 707.64 L992.90 710.86 L991.44 714.03 L989.80 717.16 L988.00 720.25 L986.03 723.28 L983.90 726.26 L981.60 729.18 L979.15 732.04 L976.54 734.83 L973.77 737.56 L970.85 740.22 L967.79 742.81 L964.58 745.32 L961.23 747.75 L957.75 750.10 L954.13 752.36 L950.38 754.54 L946.51 756.63 L942.52 758.63 L938.41 760.53 L934.19 762.34 L929.86 764.05 L925.43 765.66 L920.91 767.17 L916.29 768.58 L911.58 769.88 L906.80 771.08 L901.94 772.17 L897.01 773.15 L892.01 774.02 L886.95 774.78 L881.84 775.42 L876.68 775.96 L871.48 776.38 L866.25 776.69 L860.98 776.88 L855.68 776.96 L850.37 776.93 L845.05 776.78 L839.72 776.52 L834.38 776.14 L829.06 775.66 L823.74 775.05 L818.44 774.34 L813.16 773.52 L807.91 772.58 L802.70 771.54 L797.52 770.39 L792.40 769.13 L787.32 767.76 L782.30 766.29 L777.35 764.72 L772.46 763.05 L767.65 761.28 L762.91 759.42 L758.27 757.46 L753.71 755.41 L749.25 753.26 L744.88 751.03 L740.62 748.72 L736.48 746.32 L732.44 743.84 L728.53 741.29 L724.73 738.66 L721.07 735.96 L717.54 733.19 L714.14 730.35 L710.88 727.46 L707.76 724.50 L704.80 721.49 L701.98 718.43 L699.31 715.32 L696.80 712.16 L694.45 708.96 L692.26 705.73 L690.23 702.46 L688.37 699.15 L686.68 695.83 L685.16 692.47 L683.81 689.10 L682.63 685.71 L681.62 682.31 L680.80 678.91 L680.15 675.49 L679.67 672.08 L679.38 668.67 Z" fill="url(#gBase)"/><path d="M972.6 553 L1040 582.5 L1037.3 679.7 L997.7 662.6 L998.6 600 C999 582 990 566 972.6 553 Z" fill="#3083b9"/><polygon points="1040,582.5 1218.6,747.2 1216.3,844.8 1037.3,679.7" fill="#2a6f98"/><polygon points="1218.6,747.2 1310.4,716.8 1308.4,813.6 1216.3,844.8" fill="#3485bc"/><path d="M767 318 L760 586 C762 625 810 646 857 646 C905 646 951 625 953 589 L961 318 Z" fill="url(#gPipe)"/><ellipse cx="864" cy="314.5" rx="96.8" ry="55.5" transform="rotate(1.2 864 314.5)" fill="#2394c1" stroke="#a9dcf5" stroke-width="1.6"/><path d="M762.5 489.5 C720 505 683 540 682.81 571.49 L679.38 668.67 L679.38 668.67 L679.67 672.08 L680.15 675.49 L680.80 678.91 L681.62 682.31 L682.63 685.71 L683.81 689.10 L685.16 692.47 L686.68 695.83 L688.37 699.15 L690.23 702.46 L692.26 705.73 L694.45 708.96 L696.80 712.16 L699.31 715.32 L701.98 718.43 L704.80 721.49 L707.76 724.50 L710.88 727.46 L714.14 730.35 L717.54 733.19 L721.07 735.96 L724.73 738.66 L728.53 741.29 L732.44 743.84 L736.48 746.32 L740.62 748.72 L744.88 751.03 L749.25 753.26 L753.71 755.41 L758.27 757.46 L762.91 759.42 L767.65 761.28 L772.46 763.05 L777.35 764.72 L782.30 766.29 L787.32 767.76 L792.40 769.13 L797.52 770.39 L802.70 771.54 L807.91 772.58 L813.16 773.52 L818.44 774.34 L823.74 775.05 L829.06 775.66 L834.38 776.14 L839.72 776.52 L845.05 776.78 L850.37 776.93 L855.68 776.96 L860.98 776.88 L866.25 776.69 L871.48 776.38 L876.68 775.96 L881.84 775.42 L886.95 774.78 L892.01 774.02 L897.01 773.15 L901.94 772.17 L906.80 771.08 L911.58 769.88 L916.29 768.58 L920.91 767.17 L925.43 765.66 L929.86 764.05 L934.19 762.34 L938.41 760.53 L942.52 758.63 L946.51 756.63 L950.38 754.54 L954.13 752.36 L957.75 750.10 L961.23 747.75 L964.58 745.32 L967.79 742.81 L970.85 740.22 L973.77 737.56 L976.54 734.83 L979.15 732.04 L981.60 729.18 L983.90 726.26 L986.03 723.28 L988.00 720.25 L989.80 717.16 L991.44 714.03 L992.90 710.86 L994.19 707.64 L995.30 704.39 L996.25 701.11 L997.01 697.80 L997.60 694.46 L1000 605" fill="none" stroke="#050a10" stroke-width="1.45" stroke-linejoin="round"/><path d="M956.5 474.3 C1016.5 487.5 1084.2 507.7 1129.2 550.5 L1310.4 716.8 L1308.4 813.6 L1216.3 844.8 L1037.3 679.7 L997.7 662.6" fill="none" stroke="#050a10" stroke-width="1.45" stroke-linejoin="round"/><path d="M682.81 571.49 L683.03 574.83 L683.41 578.16 L683.95 581.49 L684.66 584.82 L685.53 588.14 L686.56 591.44 L687.75 594.73 L689.09 598.00 L690.59 601.24 L692.25 604.47 L694.07 607.66 L696.03 610.82 L698.14 613.94 L700.40 617.03 L702.81 620.07 L705.36 623.07 L708.05 626.02 L710.88 628.92 L713.84 631.77 L716.94 634.56 L720.16 637.29 L723.51 639.95 L726.98 642.56 L730.57 645.09 L734.27 647.56 L738.09 649.95 L742.01 652.27 L746.03 654.51 L750.16 656.67 L754.38 658.74 L758.69 660.74 L763.08 662.64 L767.56 664.46 L772.12 666.19 L776.74 667.83 L781.44 669.38 L786.20 670.83 L791.02 672.18 L795.89 673.44 L800.81 674.59 L805.77 675.65 L810.78 676.61 L815.81 677.46 L820.88 678.21 L825.96 678.86 L831.07 679.40 L836.19 679.84 L841.32 680.17 L846.44 680.40 L851.57 680.52 L856.69 680.53 L861.80 680.44 L866.88 680.24 L871.95 679.94 L876.98 679.53 L881.99 679.01 L886.95 678.39 L891.87 677.67 L896.74 676.84 L901.56 675.91 L906.32 674.88 L911.01 673.75 L915.64 672.52 L920.20 671.20 L924.67 669.77 L929.07 668.25 L933.38 666.64 L937.60 664.93 L941.72 663.14 L945.74 661.25 L949.67 659.28 L953.48 657.22 L957.18 655.09 L960.77 652.87 L964.24 650.57 L967.59 648.20 L970.81 645.75 L973.90 643.24 L976.86 640.65 L979.69 638.00 L982.38 635.29 L984.93 632.51 L987.33 629.68 L989.59 626.79 L991.71 623.86 L993.67 620.87 L995.48 617.84 L997.14 614.76 L998.64 611.65 L999.98 608.50 C999 582 990 566 972.6 553" fill="none" stroke="#050a10" stroke-width="1.45" stroke-linejoin="round"/><path d="M685.33 575.99 L685.76 579.17 L686.35 582.35 L687.08 585.53 L687.97 588.69 L689.01 591.84 L690.19 594.98 L691.53 598.10 L693.02 601.20 L694.65 604.27 L696.42 607.31 L698.34 610.33 L700.40 613.31 L702.60 616.25 L704.93 619.16 L707.40 622.02 L710.00 624.84 L712.73 627.61 L715.59 630.33 L718.57 633.00 L721.68 635.61 L724.90 638.17 L728.24 640.66 L731.69 643.09 L735.25 645.46 L738.91 647.76 L742.67 649.99 L746.54 652.15 L750.49 654.23 L754.54 656.24 L758.68 658.17 L762.89 660.02 L767.19 661.79 L771.56 663.47 L776.00 665.07 L780.50 666.58 L785.07 668.01 L789.69 669.35 L794.37 670.59 L799.09 671.74 L803.86 672.81 L808.67 673.77 L813.51 674.64 L818.38 675.42 L823.27 676.10 L828.19 676.68 L833.11 677.17 L838.05 677.56 L843.00 677.84 L847.95 678.03 L852.89 678.12 L857.82 678.11 L862.74 678.01 L867.64 677.80 L872.52 677.49 L877.37 677.09 L882.19 676.59 L886.97 675.99 L891.71 675.29 L896.41 674.50 L901.05 673.61 L905.64 672.62 L910.16 671.55 L914.63 670.38 L919.02 669.11 L923.34 667.76 L927.59 666.32 L931.75 664.79 L935.83 663.18 L939.82 661.48 L943.71 659.69 L947.51 657.83 L951.21 655.89 L954.81 653.87 L958.30 651.77 L961.67 649.60 L964.93 647.36 L968.08 645.05 L971.11 642.67 L974.01 640.22 L976.78 637.72 L979.43 635.15 L981.94 632.53 L984.33 629.85 L986.57 627.12 L988.68 624.34 L990.65 621.52 L992.47 618.65 L994.15 615.73 L995.69 612.78 L997.08 609.79 " fill="none" stroke="#050a10" stroke-width="0.9"/><path d="M973.5 553.5 L1040.5 582.5" fill="none" stroke="#050a10" stroke-width="2.9" stroke-linecap="round"/><path d="M975 554 L1039 581.7" fill="none" stroke="#4a98cc" stroke-width="0.7"/><path d="M1040 582.5 L1128.6 550.8 M1040 582.5 L1218.6 747.2 L1310.4 716.8 M1218.6 747.2 L1216.3 844.8 M1040 582.5 L1037.3 679.7 M838.3 681 L835.5 778.3 M986.5 636 L984 726" fill="none" stroke="#050a10" stroke-width="1.45" stroke-linejoin="round"/><path d="M1040.5 582.5 L1218.6 747.2" fill="none" stroke="#050a10" stroke-width="2.9"/><path d="M1042 583.2 L1217.5 745.6" fill="none" stroke="#4a98cc" stroke-width="0.7"/><path d="M760 586 C762 625 810 646 857 646 C905 646 951 625 953 589" fill="none" stroke="#050a10" stroke-width="1.45" stroke-linejoin="round"/><line x1="866.8" y1="194" x2="864" y2="314" stroke="#0a77ab" stroke-width="1.5"/><circle cx="864" cy="314" r="2.6" fill="#0a77ab"/><circle cx="868" cy="170.2" r="24" fill="#0077ab"/><path d="M866.9 162.6 A5.9 13.5 0 1 1 866.9 178" fill="none" stroke="#fff" stroke-width="1"/><path d="M861 160.5 L864.8 164 L861 167.4 L864.8 170.8 L861 174.2 L864.8 177.5 L861 180.7" fill="none" stroke="#fff" stroke-width="1"/><line x1="1145" y1="563.8" x2="1272" y2="520" stroke="#808080" stroke-width="2"/><circle cx="1145" cy="563.8" r="2.6" fill="#808080"/><circle cx="1295" cy="513" r="24" fill="#808080"/><rect x="1282.6" y="500.5" width="25.5" height="25.5" rx="2" fill="none" stroke="#fff" stroke-width="1"/><path d="M1282.6 507 H1308 M1282.6 513.5 H1308 M1282.6 520 H1308 M1295.3 500.5 V507 M1295.3 513.5 V520 M1289 507 V513.5 M1300 507 V513.5 M1289 520 V526 M1300 520 V526" stroke="#fff" stroke-width="1"/><text x="1316" y="498.6" font-family="Liberation Sans" font-size="20" fill="#858585">146</text><line x1="1263.7" y1="781.1" x2="1341" y2="852" stroke="#808080" stroke-width="2"/><circle cx="1263.7" cy="781.1" r="2.6" fill="#808080"/><circle cx="1358" cy="868.3" r="24" fill="#808080"/><path d="M1359.3 860.4 A6.1 13.7 0 1 0 1359.3 876.2" fill="none" stroke="#fff" stroke-width="1"/><path d="M1362 859.4 L1365.2 862.6 L1362 865.8 L1365.2 869 L1362 872.2 L1365.2 875.4 L1362 878.7" fill="none" stroke="#fff" stroke-width="1"/></svg><div class="b" style="left:952px;top:62px;width:1px;height:38px;background:#ededed;"></div><div class="b" style="left:996px;top:62px;width:1px;height:38px;background:#ededed;"></div><div class="b" style="left:1213px;top:62px;width:1px;height:38px;background:#ededed;"></div><div class="b" style="left:1253px;top:62px;width:1px;height:38px;background:#ededed;"></div><div class="b" style="left:1297px;top:62px;width:1px;height:38px;background:#ededed;"></div><div class="b" style="left:1040px;top:62px;width:39px;height:39px;background:#fafafa;border:1px solid #c4dff0;border-radius:4px;"></div><div class="b" style="left:1170px;top:62px;width:39px;height:39px;background:#fafafa;border:1px solid #c4dff0;border-radius:4px;"></div><svg style="left:0px;top:0px" width="1920" height="120"><polygon points="972.50,74.40 978.91,78.20 972.50,82.00 966.09,78.20" fill="#ededed" stroke="#777" stroke-width="0.8" stroke-linejoin="round"/><polygon points="966.09,78.20 972.50,82.00 972.50,89.60 966.09,85.80" fill="#a3a3a3" stroke="#777" stroke-width="0.8" stroke-linejoin="round"/><polygon points="972.50,82.00 978.91,78.20 978.91,85.80 972.50,89.60" fill="#d3d3d3" stroke="#777" stroke-width="0.8" stroke-linejoin="round"/><path d="M982 92.5 H985.5 V89" fill="none" stroke="#555" stroke-width="0.9"/><polygon points="1016.00,74.80 1022.06,78.55 1016.00,82.30 1009.94,78.55" fill="#f5b393" stroke="#111" stroke-width="1" stroke-linejoin="round"/><polygon points="1009.94,78.55 1016.00,82.30 1016.00,89.80 1009.94,86.05" fill="#e3622b" stroke="#111" stroke-width="1" stroke-linejoin="round"/><polygon points="1016.00,82.30 1022.06,78.55 1022.06,86.05 1016.00,89.80" fill="#ef8a5a" stroke="#111" stroke-width="1" stroke-linejoin="round"/><circle cx="1016.00" cy="74.80" r="1.25" fill="#111"/><circle cx="1009.94" cy="78.55" r="1.25" fill="#111"/><circle cx="1022.06" cy="78.55" r="1.25" fill="#111"/><circle cx="1016.00" cy="82.30" r="1.25" fill="#111"/><circle cx="1009.94" cy="86.05" r="1.25" fill="#111"/><circle cx="1022.06" cy="86.05" r="1.25" fill="#111"/><circle cx="1016.00" cy="89.80" r="1.25" fill="#111"/><polygon points="1059.00,74.80 1065.06,78.55 1059.00,82.30 1052.94,78.55" fill="#fff" stroke="#111" stroke-width="1" stroke-linejoin="round"/><polygon points="1052.94,78.55 1059.00,82.30 1059.00,89.80 1052.94,86.05" fill="#e3622b" stroke="#111" stroke-width="1" stroke-linejoin="round"/><polygon points="1059.00,82.30 1065.06,78.55 1065.06,86.05 1059.00,89.80" fill="#fff" stroke="#111" stroke-width="1" stroke-linejoin="round"/><circle cx="1059.00" cy="74.80" r="1.25" fill="#111"/><circle cx="1052.94" cy="78.55" r="1.25" fill="#111"/><circle cx="1065.06" cy="78.55" r="1.25" fill="#111"/><circle cx="1059.00" cy="82.30" r="1.25" fill="#111"/><circle cx="1052.94" cy="86.05" r="1.25" fill="#111"/><circle cx="1065.06" cy="86.05" r="1.25" fill="#111"/><circle cx="1059.00" cy="89.80" r="1.25" fill="#111"/><polygon points="1102.00,74.50 1108.06,78.25 1102.00,82.00 1095.94,78.25" fill="none" stroke="#e3622b" stroke-width="0.9" stroke-linejoin="round"/><polygon points="1095.94,78.25 1102.00,82.00 1102.00,89.50 1095.94,85.75" fill="none" stroke="#e3622b" stroke-width="0.9" stroke-linejoin="round"/><polygon points="1102.00,82.00 1108.06,78.25 1108.06,85.75 1102.00,89.50" fill="none" stroke="#e3622b" stroke-width="0.9" stroke-linejoin="round"/><circle cx="1102.00" cy="74.50" r="1.3" fill="#111"/><circle cx="1095.94" cy="78.25" r="1.3" fill="#111"/><circle cx="1108.06" cy="78.25" r="1.3" fill="#111"/><circle cx="1102.00" cy="82.00" r="1.3" fill="#111"/><circle cx="1095.94" cy="85.75" r="1.3" fill="#111"/><circle cx="1108.06" cy="85.75" r="1.3" fill="#111"/><circle cx="1102.00" cy="89.50" r="1.3" fill="#111"/><polygon points="1145.00,74.50 1151.06,78.25 1145.00,82.00 1138.94,78.25" fill="none" stroke="#bbb" stroke-width="0.7" stroke-linejoin="round"/><polygon points="1138.94,78.25 1145.00,82.00 1145.00,89.50 1138.94,85.75" fill="none" stroke="#bbb" stroke-width="0.7" stroke-linejoin="round"/><polygon points="1145.00,82.00 1151.06,78.25 1151.06,85.75 1145.00,89.50" fill="none" stroke="#bbb" stroke-width="0.7" stroke-linejoin="round"/><circle cx="1145.00" cy="74.50" r="1.1" fill="#f3b79a"/><circle cx="1138.94" cy="78.25" r="1.1" fill="#f3b79a"/><circle cx="1151.06" cy="78.25" r="1.1" fill="#f3b79a"/><circle cx="1145.00" cy="82.00" r="1.1" fill="#f3b79a"/><circle cx="1138.94" cy="85.75" r="1.1" fill="#f3b79a"/><circle cx="1151.06" cy="85.75" r="1.1" fill="#f3b79a"/><circle cx="1145.00" cy="89.50" r="1.1" fill="#f3b79a"/><circle cx="1189.2" cy="77" r="4.3" fill="#3a3a3a"/><path d="M1189.2 80 V89" stroke="#3a3a3a" stroke-width="1"/><circle cx="1189.2" cy="89.5" r="1.4" fill="#3a3a3a"/><rect x="1226.3" y="75.5" width="12.3" height="8.8" fill="none" stroke="#111" stroke-width="1.1" stroke-dasharray="2.2 2"/><path d="M1236.3 82.3 L1236.3 90 L1238.2 88.4 L1239.6 91.4 L1240.8 90.8 L1239.5 87.9 L1241.8 87.6 Z" fill="#111"/><polygon points="1274.30,74.20 1280.36,77.85 1274.30,81.50 1268.24,77.85" fill="none" stroke="#cfcfcf" stroke-width="0.8" stroke-linejoin="round"/><polygon points="1268.24,77.85 1274.30,81.50 1274.30,88.80 1268.24,85.15" fill="none" stroke="#cfcfcf" stroke-width="0.8" stroke-linejoin="round"/><polygon points="1274.30,81.50 1280.36,77.85 1280.36,85.15 1274.30,88.80" fill="none" stroke="#cfcfcf" stroke-width="0.8" stroke-linejoin="round"/><circle cx="1274.30" cy="74.20" r="0.9" fill="#c4c4c4"/><circle cx="1268.24" cy="77.85" r="0.9" fill="#c4c4c4"/><circle cx="1280.36" cy="77.85" r="0.9" fill="#c4c4c4"/><circle cx="1274.30" cy="81.50" r="0.9" fill="#c4c4c4"/><circle cx="1268.24" cy="85.15" r="0.9" fill="#c4c4c4"/><circle cx="1280.36" cy="85.15" r="0.9" fill="#c4c4c4"/><circle cx="1274.30" cy="88.80" r="0.9" fill="#c4c4c4"/><path d="M1268 81.5 H1281 M1274.3 74.5 V88.5" stroke="#d8d8d8" stroke-width="0.6"/><path d="M1313 90 L1320.5 85.5 L1320.5 77 Q1320.5 74 1324 74.5 L1325 76 L1325 84 L1317.5 89 Z M1320.5 77 Q1316 78 1315 84 L1313 85.5" fill="none" stroke="#555" stroke-width="0.9"/><path d="M1309.5 88.5 L1315.5 84.5 L1317.5 87 L1311.5 91 Z" fill="#888" stroke="#555" stroke-width="0.6"/></svg><div class="b" style="left:893px;top:919px;width:134px;height:2px;background:#333;"></div><div class="b" style="left:893px;top:917px;width:2px;height:4px;background:#333;"></div><div class="b" style="left:1025px;top:917px;width:2px;height:4px;background:#333;"></div><div class="t" style="left:960px;top:928.48px;font-size:12.5px;line-height:14.37px;color:#444;transform:translateX(-50%);">0.2 m</div><div class="b" style="left:1852px;top:712px;width:48px;height:48px;background:#0a72a8;border-radius:50%;box-shadow:0 2px 8px rgba(0,0,0,0.15);"></div><svg style="left:1852px;top:712px" width="48" height="48"><path d="M13 15 Q13 11.5 16.5 11.5 H30.5 Q34 11.5 34 15 V35.5 L30 33 H16.5 Q13 33 13 29.5 Z" fill="#fff"/><path d="M17.5 23.5 Q23.5 28.5 29.5 23.5" fill="none" stroke="#0a72a8" stroke-width="1.6"/></svg><svg style="left:1700px;top:740px" width="220" height="205" viewBox="1700 740 220 205"><line x1="1830.5" y1="846.8" x2="1752" y2="873.5" stroke="#ff8080" stroke-width="1"/><path d="M1750 874.3 L1758 869.8 L1759 873 Z" fill="#ff6a6a"/><line x1="1830.5" y1="846.8" x2="1877" y2="888" stroke="#90e890" stroke-width="1"/><path d="M1879 890 L1871 886.5 L1874 883.5 Z" fill="#3bd33b"/><line x1="1830.8" y1="846.8" x2="1831.2" y2="775" stroke="#a6a6ff" stroke-width="1.1"/><path d="M1831.5 771 L1829.2 779 L1833.6 779 Z" fill="#6f6fff"/><text x="1831.5" y="766.5" font-family="Liberation Sans" font-size="12" fill="#5555ff" text-anchor="middle">Z</text><text x="1742" y="881" font-family="Liberation Sans" font-size="12" fill="#ff4444" text-anchor="middle">X</text><text x="1885" y="900" font-family="Liberation Sans" font-size="12" fill="#33cc33" text-anchor="middle">y</text><polygon points="1830.5,797.6 1862.2,827.3 1861.4,876 1810.8,892.7 1777.8,863 1779.2,814.3" fill="rgba(255,255,255,0.55)"/><path d="M1779.2 814.3 L1830.5 797.6 L1862.2 827.3 L1811.4 844 Z M1811.4 844 L1810.8 892.7 M1779.2 814.3 L1777.8 863 L1810.8 892.7 L1861.4 876 L1862.2 827.3" fill="none" stroke="#a2a2a2" stroke-width="1.25"/><text transform="translate(1822,822) rotate(160) scale(1,0.7)" font-family="Liberation Sans" font-size="8" fill="#888" text-anchor="middle">TOP</text><text transform="translate(1837,864) rotate(172) scale(1,0.75)" font-family="Liberation Sans" font-size="8" fill="#888" text-anchor="middle">LEFT</text><text transform="translate(1794,853) rotate(100) scale(1,0.7)" font-family="Liberation Sans" font-size="7" fill="#999" text-anchor="middle">FRONT</text><path d="M1818 772 L1822 768 L1826 772" fill="none" stroke="#666" stroke-width="1"/><path d="M1818 918 L1822 922 L1826 918" fill="none" stroke="#666" stroke-width="1"/><path d="M1748 841.5 L1744.5 845.5 L1748 849.5" fill="none" stroke="#666" stroke-width="1"/><path d="M1896 841.5 L1899.5 845.5 L1896 849.5" fill="none" stroke="#666" stroke-width="1"/><path d="M1865.5 796.5 L1871 791.5 L1876.5 796.5 M1867 795.5 V801 H1875 V795.5 M1869.5 801 V797.5 H1872.5 V801" fill="none" stroke="#666" stroke-width="1"/><path d="M1765.2 894.2 A5.3 5.3 0 1 0 1771.5 892.6" fill="none" stroke="#777" stroke-width="1.1"/><path d="M1762.3 897.5 L1763.6 892.3 L1767.4 895.6 Z" fill="#555"/><path d="M1875.9 894.2 A5.3 5.3 0 1 1 1869.6 892.6" fill="none" stroke="#777" stroke-width="1.1"/><path d="M1878.8 897.5 L1877.5 892.3 L1873.7 895.6 Z" fill="#555"/></svg><svg style="left:0px;top:0px" width="400" height="450"><defs><filter id="sh" x="-20%" y="-20%" width="140%" height="140%"><feGaussianBlur in="SourceAlpha" stdDeviation="2"/><feOffset dx="2" dy="3" result="o"/><feComponentTransfer><feFuncA type="linear" slope="0.6"/></feComponentTransfer><feMerge><feMergeNode/><feMergeNode in="SourceGraphic"/></feMerge></filter></defs><polygon points="161.35,294.65 242.8,250.1 233,249.8 233,242.1 267.4,240.8 247.5,268.9 241.7,264.4 246.5,257 165.25,301.75" fill="#ff0000" filter="url(#sh)"/><polygon points="164.8,347.6 250.9,376.4 244.6,369.3 250.4,364 274.2,388.4 240.1,393.4 239,385.4 249.9,384.6 162.2,355.4" fill="#ff0000" filter="url(#sh)"/></svg>
</body></html>
